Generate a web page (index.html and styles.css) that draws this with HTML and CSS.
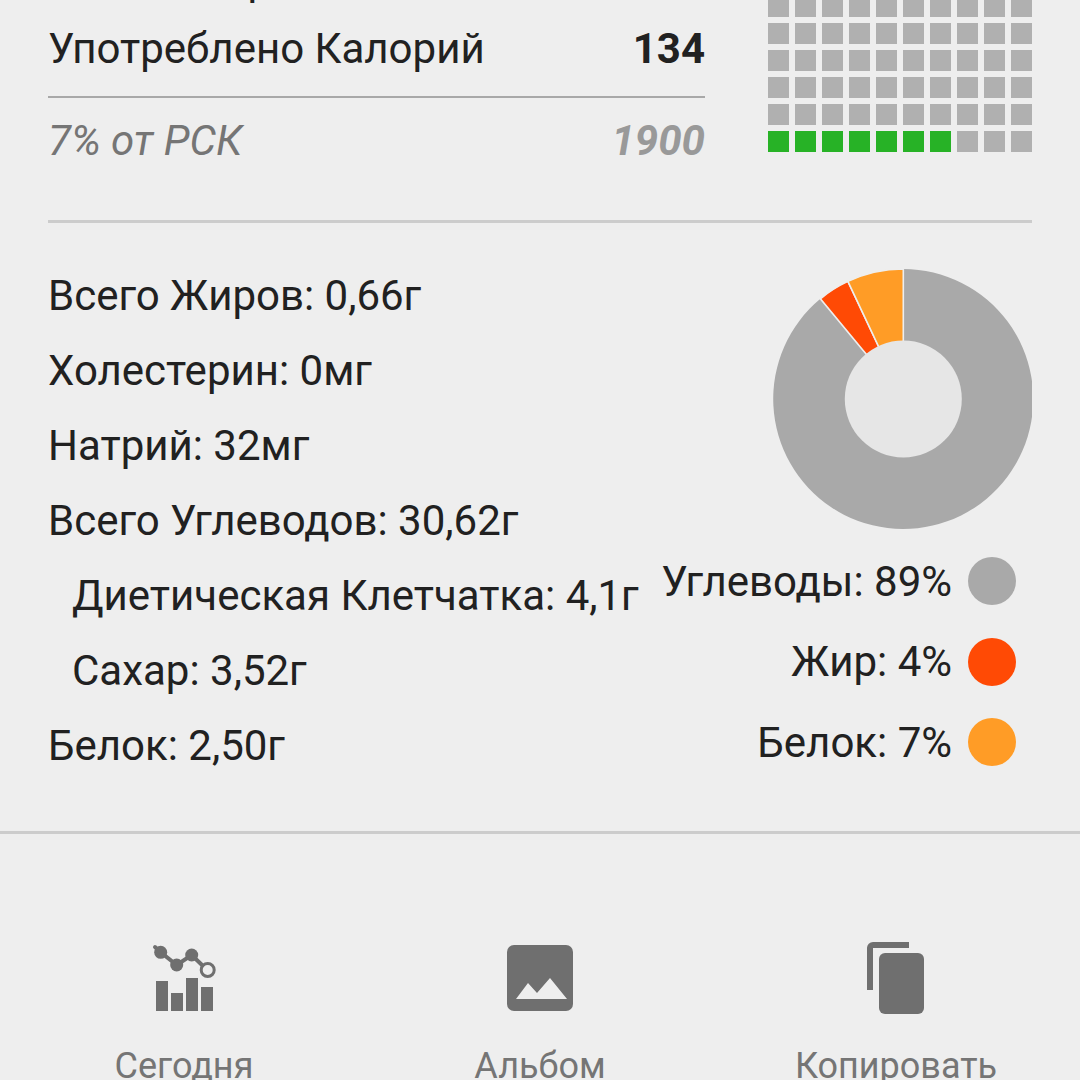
FILE: index.html
```html
<!DOCTYPE html>
<html lang="ru">
<head>
    <meta charset="UTF-8" />
    <meta name="viewport" content="width=device-width, initial-scale=1" />
    <title>Питание</title>
    <link rel="stylesheet" href="styles.css">
</head>
<body>
    <div class="page">
        <section class="summary">
            <div class="totals">
                <div class="total-row">Итог Калорий</div>
                <div class="total-row total-main">
                    <span>Употреблено Калорий</span>
                    <b>134</b>
                </div>
                <div class="total-row total-sub">
                    <span>7% от РСК</span>
                    <b>1900</b>
                </div>
            </div>
            <div class="cells">
                <i></i><i></i><i></i><i></i><i></i><i></i><i></i><i></i><i></i><i></i>
                <i></i><i></i><i></i><i></i><i></i><i></i><i></i><i></i><i></i><i></i>
                <i></i><i></i><i></i><i></i><i></i><i></i><i></i><i></i><i></i><i></i>
                <i></i><i></i><i></i><i></i><i></i><i></i><i></i><i></i><i></i><i></i>
                <i></i><i></i><i></i><i></i><i></i><i></i><i></i><i></i><i></i><i></i>
                <i class="on"></i><i class="on"></i><i class="on"></i><i class="on"></i><i class="on"></i><i class="on"></i><i class="on"></i><i></i><i></i><i></i>
            </div>
        </section>

        <section class="details">
            <ul class="nutrients">
                <li>Всего Жиров: 0,66г</li>
                <li>Холестерин: 0мг</li>
                <li>Натрий: 32мг</li>
                <li>Всего Углеводов: 30,62г</li>
                <li class="sub">Диетическая Клетчатка: 4,1г</li>
                <li class="sub">Сахар: 3,52г</li>
                <li>Белок: 2,50г</li>
            </ul>
            <div class="macros">
                <svg class="donut" width="259" height="260" viewBox="0 0 259 260">
                    <path fill="#a9a9a9" d="M130.3 130V0A130 130 0 1 1 47.4 29.8Z" />
                    <path fill="#ff4a05" stroke="#eee" stroke-width="1.6" d="M130.3 130L47.4 29.8A130 130 0 0 1 74.9 12.4Z" />
                    <path fill="#ff9c26" stroke="#eee" stroke-width="1.6" d="M130.3 130L74.9 12.4A130 130 0 0 1 130.3 0Z" />
                    <circle cx="130.3" cy="130" r="58.5" fill="#e6e6e6" />
                </svg>
                <ul class="legend">
                    <li>Углеводы: 89%<span class="dot dot-carbs"></span></li>
                    <li>Жир: 4%<span class="dot dot-fat"></span></li>
                    <li>Белок: 7%<span class="dot dot-protein"></span></li>
                </ul>
            </div>
        </section>

        <nav class="tabs">
            <a class="tab">
                <svg width="72" height="72" viewBox="0 0 72 72" fill="#6f6f6f">
                    <rect x="8" y="39" width="12" height="30" />
                    <rect x="23" y="51" width="12" height="18" />
                    <rect x="38" y="36" width="12" height="33" />
                    <rect x="53" y="45" width="12" height="24" />
                    <path d="M7 5L12.7 10.3L28.7 23L43.7 13L54 23" fill="none" stroke="#6f6f6f" stroke-width="4" stroke-linecap="round" />
                    <circle cx="12.7" cy="10.3" r="6.5" />
                    <circle cx="28.7" cy="23" r="6.5" />
                    <circle cx="43.7" cy="13" r="6.5" />
                    <circle cx="59.7" cy="28" r="6.5" fill="none" stroke="#6f6f6f" stroke-width="3" />
                </svg>
                <span>Сегодня</span>
            </a>
            <a class="tab">
                <svg width="72" height="72" viewBox="0 0 72 72" fill="#6f6f6f">
                    <rect x="3" y="3" width="66" height="66" rx="7" />
                    <path fill="#eee" d="M12 57L24 41L33 51L46 36L63 57Z" />
                </svg>
                <span>Альбом</span>
            </a>
            <a class="tab">
                <svg width="72" height="72" viewBox="0 0 72 72" fill="#6f6f6f">
                    <path d="M7 48V6A6 6 0 0 1 13 0H49V6H13V48Z" />
                    <rect x="19" y="11" width="45" height="61" rx="6" />
                </svg>
                <span>Копировать</span>
            </a>
        </nav>
    </div>
</body>
</html>
```

FILE: styles.css
```css
html, body {
    margin: 0;
    height: 100%;
    overflow: hidden;
}
body {
    background: #eeeeee;
    color: #212121;
    font-family: Roboto, "Noto Sans", sans-serif;
    font-size: 42px;
}
ul {
    list-style: none;
    margin: 0;
    padding: 0;
}
.page {
    height: 1080px;
}

/* top block, scrolled partly off the screen */
.summary {
    display: flex;
    justify-content: space-between;
    margin: -55px 48px 0;
    height: 275px;
    border-bottom: 3px solid #cccccc;
}
.totals {
    width: 657px;
}
.total-row {
    display: flex;
    justify-content: space-between;
    align-items: center;
    height: 69px;
    white-space: nowrap;
}
.total-main {
    border-bottom: 2px solid #a8a8a8;
    padding-bottom: 13px;
}
.total-sub {
    height: 84px;
    font-style: italic;
    color: #757575;
}
.total-sub b {
    color: #999999;
}
.cells {
    display: grid;
    grid-template-columns: repeat(10, 21px);
    grid-auto-rows: 21px;
    gap: 6px;
    margin-top: 51px;
}
.cells i {
    background: #b0b0b0;
}
.cells i.on {
    background: #27b226;
}

/* nutrients and chart */
.details {
    display: flex;
    justify-content: space-between;
    margin: 35px 48px 0;
    height: 573px;
}
.nutrients li {
    height: 75px;
    line-height: 75px;
    white-space: nowrap;
}
.nutrients .sub {
    padding-left: 24px;
}
.macros {
    display: flex;
    flex-direction: column;
    align-items: flex-end;
    padding-top: 11px;
}
.donut {
    display: block;
}
.legend {
    margin-top: 12px;
    padding-right: 16px;
}
.legend li {
    display: flex;
    justify-content: flex-end;
    align-items: center;
    gap: 16px;
    height: 80.5px;
    white-space: nowrap;
}
.dot {
    width: 48px;
    height: 48px;
    border-radius: 50%;
}
.dot-carbs { background: #a9a9a9; }
.dot-fat { background: #ff4a05; }
.dot-protein { background: #ff9c26; }

/* bottom actions */
.tabs {
    display: grid;
    grid-template-columns: repeat(3, 356px);
    padding: 0 6px;
    border-top: 3px solid #cccccc;
}
.tab {
    display: flex;
    flex-direction: column;
    align-items: center;
    padding-top: 108px;
    color: #757575;
    font-size: 36px;
}
.tab svg {
    display: block;
}
.tab span {
    margin-top: 31px;
    white-space: nowrap;
}
```
